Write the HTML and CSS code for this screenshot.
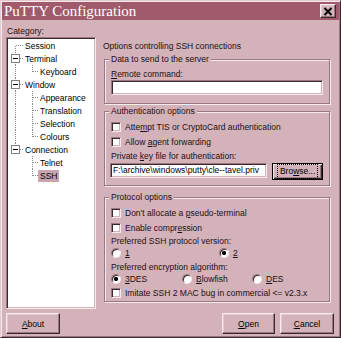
FILE: index.html
```html
<!DOCTYPE html>
<html>
<head>
<meta charset="utf-8">
<link rel="stylesheet" href="styles.css">
</head>
<body>
<div class="window">
  <div class="titlebar">
    <span class="title">PuTTY Configuration</span>
    <div class="close"><svg width="10" height="9" viewBox="0 0 10 9"><path d="M1.5 1 L8.5 8 M8.5 1 L1.5 8" stroke="#000" stroke-width="2"/></svg></div>
  </div>
  <div class="main">
    <div class="sidebar">
      <div class="cat-label">Category:</div>
      <div class="tree">
        <div class="node"><svg class="conn" width="17" height="13"><path d="M7.5 7 V13 M8 6.5 H16" class="dot"/></svg><span class="lbl">Session</span></div>
        <div class="node"><svg class="conn" width="17" height="13"><path d="M7.5 0 V13 M12 6.5 H16" class="dot"/><rect x="3.5" y="2.5" width="8" height="8" class="box"/><path d="M5 6.5 H10" class="minus"/></svg><span class="lbl">Terminal</span></div>
        <div class="node"><svg class="conn" width="32" height="13"><path d="M7.5 0 V13 M24.5 0 V7 M25 6.5 H31" class="dot"/></svg><span class="lbl">Keyboard</span></div>
        <div class="node"><svg class="conn" width="17" height="13"><path d="M7.5 0 V13 M12 6.5 H16" class="dot"/><rect x="3.5" y="2.5" width="8" height="8" class="box"/><path d="M5 6.5 H10" class="minus"/></svg><span class="lbl">Window</span></div>
        <div class="node"><svg class="conn" width="32" height="13"><path d="M7.5 0 V13 M24.5 0 V13 M25 6.5 H31" class="dot"/></svg><span class="lbl">Appearance</span></div>
        <div class="node"><svg class="conn" width="32" height="13"><path d="M7.5 0 V13 M24.5 0 V13 M25 6.5 H31" class="dot"/></svg><span class="lbl">Translation</span></div>
        <div class="node"><svg class="conn" width="32" height="13"><path d="M7.5 0 V13 M24.5 0 V13 M25 6.5 H31" class="dot"/></svg><span class="lbl">Selection</span></div>
        <div class="node"><svg class="conn" width="32" height="13"><path d="M7.5 0 V13 M24.5 0 V7 M25 6.5 H31" class="dot"/></svg><span class="lbl">Colours</span></div>
        <div class="node"><svg class="conn" width="17" height="13"><path d="M7.5 0 V3 M12 6.5 H16" class="dot"/><rect x="3.5" y="2.5" width="8" height="8" class="box"/><path d="M5 6.5 H10" class="minus"/></svg><span class="lbl">Connection</span></div>
        <div class="node"><svg class="conn" width="32" height="13"><path d="M24.5 0 V13 M25 6.5 H31" class="dot"/></svg><span class="lbl">Telnet</span></div>
        <div class="node"><svg class="conn" width="32" height="13"><path d="M24.5 0 V7 M25 6.5 H31" class="dot"/></svg><span class="lbl sel">SSH</span></div>
      </div>
    </div>
    <div class="panel">
      <div class="panel-head">Options controlling SSH connections</div>

      <div class="group g1">
        <div class="gtitle">Data to send to the server</div>
        <div class="label first"><u>R</u>emote command:</div>
        <div class="input wide"></div>
      </div>

      <div class="group g2">
        <div class="gtitle">Authentication options</div>
        <div class="check first"><span class="cb"></span><span>Atte<u>m</u>pt TIS or CryptoCard authentication</span></div>
        <div class="check"><span class="cb"></span><span>Allow <u>a</u>gent forwarding</span></div>
        <div class="label">Private <u>k</u>ey file for authentication:</div>
        <div class="filerow">
          <div class="input file">F:\archive\windows\putty\cle--tavel.priv</div>
          <div class="btn browse"><span class="focus">Bro<u>w</u>se...</span></div>
        </div>
      </div>

      <div class="group g3">
        <div class="gtitle">Protocol options</div>
        <div class="check first"><span class="cb"></span><span>Don't allocate a <u>p</u>seudo-terminal</span></div>
        <div class="check"><span class="cb"></span><span>Enable compr<u>e</u>ssion</span></div>
        <div class="label">Preferred SSH protocol version:</div>
        <div class="radios">
          <div class="radio r-ver1"><span class="rb"></span><span><u>1</u></span></div>
          <div class="radio"><span class="rb on"></span><span><u>2</u></span></div>
        </div>
        <div class="label sp">Preferred encryption algorithm:</div>
        <div class="radios">
          <div class="radio r-c1"><span class="rb on"></span><span><u>3</u>DES</span></div>
          <div class="radio r-c2"><span class="rb"></span><span><u>B</u>lowfish</span></div>
          <div class="radio"><span class="rb"></span><span><u>D</u>ES</span></div>
        </div>
        <div class="check last"><span class="cb"></span><span>Imitate SSH 2 MAC bug in commercial &lt;= v2.3.x</span></div>
      </div>
    </div>
  </div>
  <div class="footer">
    <div class="btn about"><span><u>A</u>bout</span></div>
    <div class="spacer"></div>
    <div class="btn open"><span><u>O</u>pen</span></div>
    <div class="btn cancel"><span><u>C</u>ancel</span></div>
  </div>
</div>
</body>
</html>
```

FILE: styles.css
```css
:root {
  --face: #d4b2b9;
  --hl: #f6eaed;
  --light: #e3c9cf;
  --shadow: #9a7880;
  --dark: #3a282d;
  --title: #a05a6c;
  --text: #1c1014;
}

* { box-sizing: border-box; }

html, body {
  margin: 0;
  padding: 0;
  background: var(--face);
}

body {
  font-family: "Liberation Sans", Arial, sans-serif;
  font-size: 8.5px;
  color: var(--text);
}

u { text-decoration: underline; text-underline-offset: 1px; }

.window {
  width: 341px;
  height: 338px;
  background: var(--face);
  border: 1px solid;
  border-color: var(--light) var(--dark) var(--dark) var(--light);
  box-shadow: inset 1px 1px 0 var(--hl), inset -1px -1px 0 var(--shadow);
  padding: 1px;
  display: flex;
  flex-direction: column;
}

.titlebar {
  height: 18px;
  background: var(--title);
  display: flex;
  align-items: center;
  padding: 0 2px 0 2px;
}

.title {
  flex: 1;
  font-family: "Liberation Serif", "Times New Roman", serif;
  font-size: 15px;
  color: #fff;
  line-height: 18px;
  padding-left: 0;
}

.close {
  width: 16px;
  height: 14px;
  background: var(--face);
  border: 1px solid;
  border-color: var(--hl) var(--dark) var(--dark) var(--hl);
  box-shadow: inset -1px -1px 0 var(--shadow), inset 1px 1px 0 var(--light);
  display: flex;
  align-items: center;
  justify-content: center;
  margin-right: 1px;
}
.close svg { display: block; }

.main {
  display: flex;
  height: 289px;
}

.sidebar {
  margin-left: 4px;
  width: 90px;
}

.cat-label {
  margin-top: 6px;
  height: 11px;
  line-height: 11px;
  padding-left: 1px;
}

.tree {
  height: 272px;
  background: #fff;
  border: 1px solid;
  border-color: var(--shadow) var(--hl) var(--hl) var(--shadow);
  box-shadow: inset 1px 1px 0 var(--dark), inset -1px -1px 0 var(--face);
  padding: 1px 0 0 1px;
}

.node {
  display: flex;
  align-items: center;
  height: 13px;
  line-height: 12px;
  color: #000;
}
.conn { display: block; flex: none; overflow: visible; }
.dot { stroke: #8a8a8a; stroke-width: 1; stroke-dasharray: 1 1; fill: none; }
.box { fill: #fff; stroke: #808080; stroke-width: 1; }
.minus { stroke: #000; stroke-width: 1; }
.lbl { white-space: nowrap; }
.sel {
  background: #c9a6ae;
  padding: 0 2px;
  margin-left: -2px;
  height: 12px;
}

.panel {
  margin-left: 7px;
  width: 228px;
}

.panel-head {
  margin-top: 20px;
  height: 12px;
  line-height: 12px;
}

.group {
  margin-left: 1px;
  width: 226px;
  border: 1px solid var(--shadow);
  box-shadow: inset 1px 1px 0 var(--hl), 1px 1px 0 var(--hl);
  padding: 0 6px 0 6px;
}
.g1 { margin-top: 7px; padding-bottom: 8px; }
.g2 { margin-top: 7px; padding-bottom: 5px; }
.g3 { margin-top: 11px; padding-bottom: 1px; }

.gtitle {
  width: fit-content;
  height: 12px;
  line-height: 12px;
  margin: -7px 0 0 -2px;
  padding: 0 2px;
  background: var(--face);
}

.label {
  height: 12px;
  line-height: 12px;
  white-space: nowrap;
}
.label.first { margin-top: 3px; }
.label.sp { margin-top: 2px; }
.g2 .label { margin-top: 1px; }

.input {
  height: 15px;
  background: #fff;
  border: 1px solid;
  border-color: var(--shadow) var(--hl) var(--hl) var(--shadow);
  box-shadow: inset 1px 1px 0 var(--dark), inset -1px -1px 0 var(--face);
  color: #000;
  white-space: nowrap;
  overflow: hidden;
}
.input.wide { width: 212px; }

.filerow {
  margin-top: 1px;
  display: flex;
  align-items: flex-start;
  margin-left: -1px;
}
.input.file {
  width: 158px;
  line-height: 13px;
  padding-left: 2px;
}

.check {
  display: flex;
  align-items: center;
  height: 14px;
  white-space: nowrap;
}
.check.first { margin-top: 3px; }
.g2 .check + .check, .g3 .check + .check, .check.last { margin-top: 1px; }

.cb {
  width: 10px;
  height: 10px;
  flex: none;
  margin-right: 4px;
  background: #fff;
  border: 1px solid;
  border-color: var(--shadow) var(--hl) var(--hl) var(--shadow);
  box-shadow: inset 1px 1px 0 var(--dark), inset -1px -1px 0 var(--face);
}

.radios {
  display: flex;
  height: 12px;
}
.radio {
  display: flex;
  align-items: center;
  white-space: nowrap;
}
.r-ver1 { width: 108px; }
.r-c1 { width: 71px; }
.r-c2 { width: 70px; }

.rb {
  width: 10px;
  height: 10px;
  flex: none;
  margin-right: 4px;
  border-radius: 50%;
  background: #fff;
  border: 1px solid;
  border-color: var(--shadow) var(--hl) var(--hl) var(--shadow);
  box-shadow: inset 1px 1px 0 var(--dark);
}
.rb.on {
  background: radial-gradient(circle at 50% 50%, #000 0 1.8px, #fff 2.4px);
}

.btn {
  background: var(--face);
  border: 1px solid;
  border-color: var(--hl) var(--dark) var(--dark) var(--hl);
  box-shadow: inset -1px -1px 0 var(--shadow), inset 1px 1px 0 var(--light);
  display: flex;
  align-items: center;
  justify-content: center;
  color: #000;
  white-space: nowrap;
}

.browse {
  width: 51px;
  height: 17px;
  margin-left: 5px;
  border: 1px solid #000;
  box-shadow: inset 1px 1px 0 var(--hl), inset -1px -1px 0 var(--dark), inset -2px -2px 0 var(--shadow);
}
.browse .focus {
  outline: 1px dotted #000;
  padding: 1px 2px;
  line-height: 11px;
}

.footer {
  margin-top: 4px;
  display: flex;
  padding: 0 5px 0 4px;
  gap: 4px;
}
.spacer { flex: 1; }
.btn.about { width: 54px; height: 21px; }
.btn.open { width: 53px; height: 21px; }
.btn.cancel { width: 54px; height: 21px; margin-left: 1px; }
```
